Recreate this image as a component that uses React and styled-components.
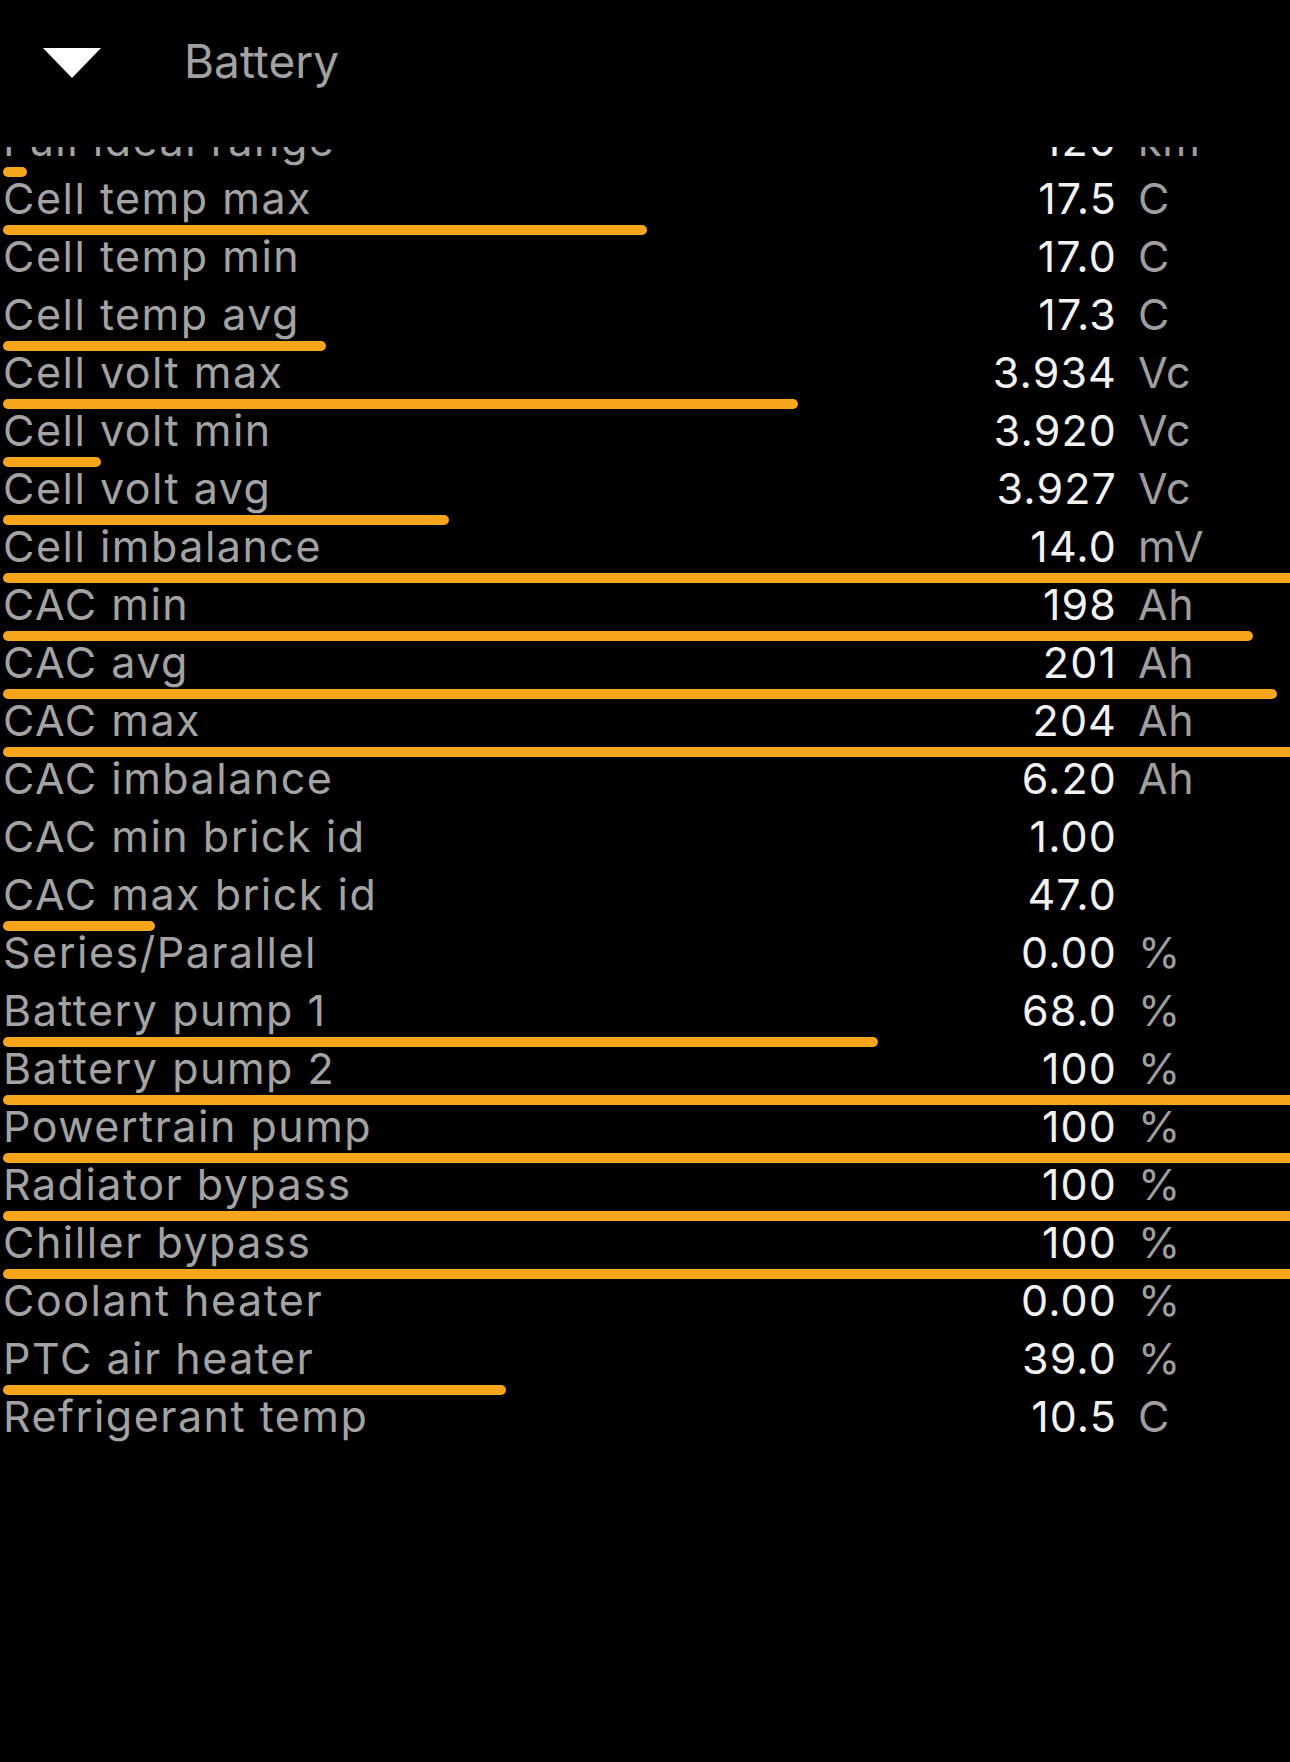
import styled, { createGlobalStyle } from "styled-components";

const GlobalStyle = createGlobalStyle`
  html, body {
    margin: 0;
    padding: 0;
    background: #000;
  }
  body {
    font-family: Inter, "Liberation Sans", sans-serif;
  }
`;

const FULL = 1300;

const rows = [
  { label: "Full ideal range", value: "120", unit: "km", bar: 27 },
  { label: "Cell temp max", value: "17.5", unit: "C", bar: 647 },
  { label: "Cell temp min", value: "17.0", unit: "C", bar: 0 },
  { label: "Cell temp avg", value: "17.3", unit: "C", bar: 326 },
  { label: "Cell volt max", value: "3.934", unit: "Vc", bar: 798 },
  { label: "Cell volt min", value: "3.920", unit: "Vc", bar: 101 },
  { label: "Cell volt avg", value: "3.927", unit: "Vc", bar: 449 },
  { label: "Cell imbalance", value: "14.0", unit: "mV", bar: FULL },
  { label: "CAC min", value: "198", unit: "Ah", bar: 1253 },
  { label: "CAC avg", value: "201", unit: "Ah", bar: 1277 },
  { label: "CAC max", value: "204", unit: "Ah", bar: FULL },
  { label: "CAC imbalance", value: "6.20", unit: "Ah", bar: 0 },
  { label: "CAC min brick id", value: "1.00", unit: "", bar: 0 },
  { label: "CAC max brick id", value: "47.0", unit: "", bar: 155 },
  { label: "Series/Parallel", value: "0.00", unit: "%", bar: 0 },
  { label: "Battery pump 1", value: "68.0", unit: "%", bar: 878 },
  { label: "Battery pump 2", value: "100", unit: "%", bar: FULL },
  { label: "Powertrain pump", value: "100", unit: "%", bar: FULL },
  { label: "Radiator bypass", value: "100", unit: "%", bar: FULL },
  { label: "Chiller bypass", value: "100", unit: "%", bar: FULL },
  { label: "Coolant heater", value: "0.00", unit: "%", bar: 0 },
  { label: "PTC air heater", value: "39.0", unit: "%", bar: 506 },
  { label: "Refrigerant temp", value: "10.5", unit: "C", bar: 0 },
];

const Screen = styled.div`
  width: 1290px;
  height: 1762px;
  background: #000;
  overflow: hidden;
`;

const Header = styled.header`
  height: 126px;
  display: flex;
  align-items: center;
  padding-left: 43px;
`;

const Caret = styled.svg`
  width: 58px;
  height: 30px;
  display: block;
  flex-shrink: 0;
`;

const Title = styled.h1`
  margin: 0 0 4px 83px;
  font-size: 46px;
  line-height: 46px;
  font-weight: 400;
  color: #a2a2a2;
`;

const Viewport = styled.div`
  margin-top: 21px;
  height: 1615px;
  overflow: hidden;
`;

const List = styled.div`
  margin-top: -26px;
`;

const Row = styled.div`
  height: 58px;
  display: flex;
  flex-direction: column;
`;

const Line = styled.div`
  display: grid;
  grid-template-columns: 1fr auto 152px;
  column-gap: 21px;
  height: 38px;
  line-height: 38px;
  padding-left: 3px;
  font-size: 43px;
  white-space: nowrap;
`;

const Label = styled.span`
  color: #a3a3a3;
  letter-spacing: 1.5px;
`;

const Value = styled.span`
  color: #f2f2f2;
  text-align: right;
  letter-spacing: 1.1px;
`;

const Unit = styled.span`
  color: #9e9e9e;
  letter-spacing: 0.6px;
`;

const Track = styled.div`
  height: 10px;
  margin-top: 8px;
`;

const Bar = styled.div`
  height: 10px;
  margin-left: 3px;
  border-radius: 5px;
  background: #f7a51d;
`;

export default function App() {
  return (
    <Screen>
      <GlobalStyle />
      <Header>
        <Caret viewBox="0 0 58 30">
          <polygon points="0,0 58,0 29,30" fill="#ffffff" />
        </Caret>
        <Title>Battery</Title>
      </Header>
      <Viewport>
        <List>
          {rows.map((r) => (
            <Row key={r.label}>
              <Line>
                <Label>{r.label}</Label>
                <Value>{r.value}</Value>
                <Unit>{r.unit}</Unit>
              </Line>
              <Track>
                {r.bar > 0 && <Bar style={{ width: `${r.bar - 3}px` }} />}
              </Track>
            </Row>
          ))}
        </List>
      </Viewport>
    </Screen>
  );
}
